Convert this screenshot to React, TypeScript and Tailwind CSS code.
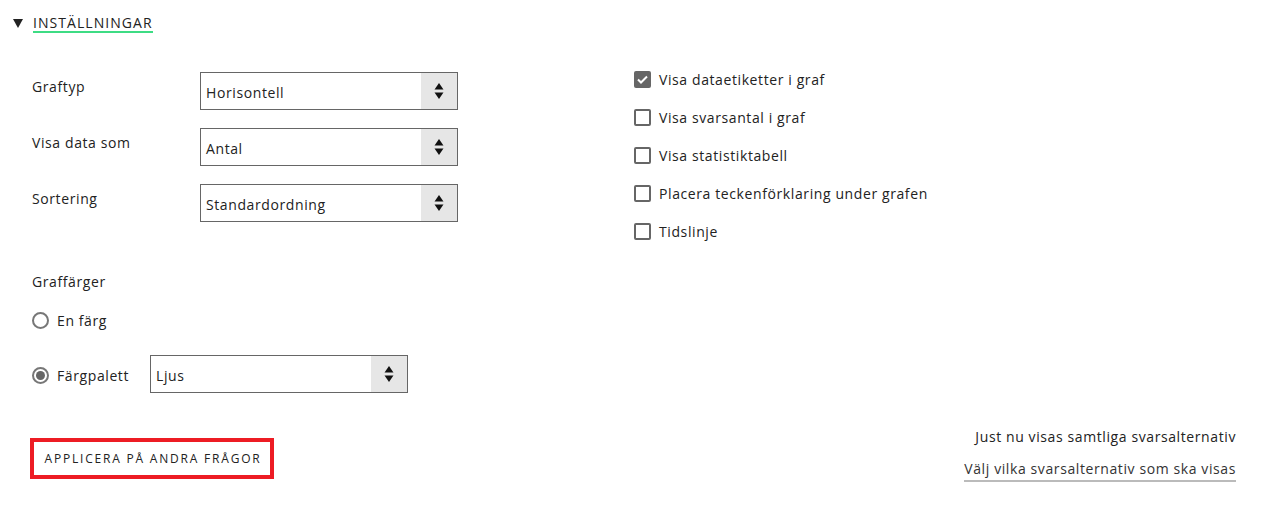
const font = { fontFamily: '"Open Sans", "Liberation Sans", sans-serif' };

function Arrows() {
  return (
    <svg width="10" height="18" viewBox="0 0 10 18" aria-hidden="true">
      <path d="M5 1 L9.5 7.5 L0.5 7.5 Z" fill="#111" />
      <path d="M0.5 10.5 L9.5 10.5 L5 17 Z" fill="#111" />
    </svg>
  );
}

function Select({ value, className = "" }: { value: string; className?: string }) {
  return (
    <div className={`flex h-[38px] w-[258px] items-stretch border border-[#666] bg-white ${className}`}>
      <span className="flex flex-1 items-center pl-[5px] pt-[2px] text-[14px] tracking-[0.6px] text-[#222]">{value}</span>
      <span className="flex w-[36px] items-center justify-center bg-[#e6e6e6]">
        <Arrows />
      </span>
    </div>
  );
}

function Checkbox({ label, checked = false }: { label: string; checked?: boolean }) {
  return (
    <label className="flex h-[38px] items-center gap-[8px] text-[14px] tracking-[0.6px] text-[#222]">
      {checked ? (
        <span className="flex h-[17px] w-[17px] items-center justify-center rounded-[2px] bg-[#666]">
          <svg width="11" height="9" viewBox="0 0 11 9" aria-hidden="true">
            <path d="M1 4.5 L4 7.5 L10 1.5" stroke="#fff" strokeWidth="2" fill="none" />
          </svg>
        </span>
      ) : (
        <span className="h-[17px] w-[17px] rounded-[2px] border-2 border-[#666] bg-white" />
      )}
      <span>{label}</span>
    </label>
  );
}

function Radio({ checked = false }: { checked?: boolean }) {
  return (
    <span className="flex h-[17px] w-[17px] items-center justify-center rounded-full border-2 border-[#777] bg-white">
      {checked && <span className="h-[9px] w-[9px] rounded-full bg-[#666]" />}
    </span>
  );
}

export default function App() {
  return (
    <div className="h-[509px] w-[1261px] bg-white tracking-[0.6px] text-[#222]" style={font}>
      <div className="flex h-[35px] items-start pl-[13px] pt-[14px]">
        <svg width="10" height="9" viewBox="0 0 10 9" className="mt-[5px]" aria-hidden="true">
          <path d="M0 0 L10 0 L5 9 Z" fill="#222" />
        </svg>
        <span className="ml-[10px] border-b-2 border-[#3ddc84] text-[14px] leading-[17px] tracking-[1.05px] text-[#222]">
          INSTÄLLNINGAR
        </span>
      </div>

      <div className="flex pl-[32px] pt-[37px]">
        <div className="w-[600px]">
          <div className="flex flex-col gap-[18px]">
            {[
              ["Graftyp", "Horisontell"],
              ["Visa data som", "Antal"],
              ["Sortering", "Standardordning"],
            ].map(([label, value]) => (
              <div key={label} className="flex items-start">
                <span className="w-[168px] pt-[4px] text-[14px]">{label}</span>
                <Select value={value} />
              </div>
            ))}
          </div>

          <div className="mt-[49px] text-[14px] font-medium">Graffärger</div>
          <div className="mt-[18px] flex items-center gap-[8px] text-[14px]">
            <Radio />
            <span>En färg</span>
          </div>
          <div className="mt-[24px] flex items-start">
            <div className="flex w-[118px] items-center gap-[8px] pt-[10px] text-[14px]">
              <Radio checked />
              <span>Färgpalett</span>
            </div>
            <Select value="Ljus" />
          </div>
        </div>

        <div className="pl-[2px]">
          <div className="-mt-[12px] flex flex-col">
            <Checkbox label="Visa dataetiketter i graf" checked />
            <Checkbox label="Visa svarsantal i graf" />
            <Checkbox label="Visa statistiktabell" />
            <Checkbox label="Placera teckenförklaring under grafen" />
            <Checkbox label="Tidslinje" />
          </div>
        </div>
      </div>

      <div className="flex items-start justify-between pl-[30px] pr-[25px] pt-[33px]">
        <button className="mt-[12px] h-[41px] w-[244px] border-[4px] border-[#ed1c24] bg-white pl-[2px] text-[12px] tracking-[1.8px] text-[#222]">
          APPLICERA PÅ ANDRA FRÅGOR
        </button>
        <div className="flex flex-col items-end text-[14px]">
          <span className="text-[#222]">Just nu visas samtliga svarsalternativ</span>
          <span className="mt-[11px] border-b-2 border-[#bbb] pb-[1px] font-medium text-[#333]">
            Välj vilka svarsalternativ som ska visas
          </span>
        </div>
      </div>
    </div>
  );
}
